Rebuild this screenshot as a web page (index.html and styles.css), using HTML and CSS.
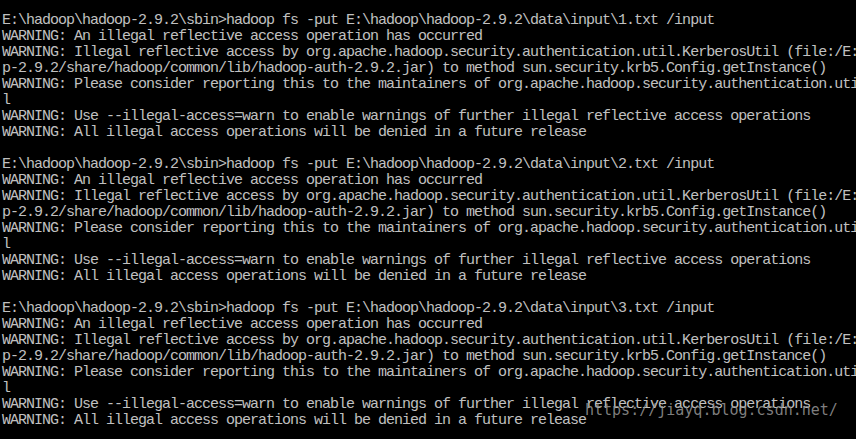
FILE: index.html
```html
<!DOCTYPE html>
<html>
<head>
<meta charset="utf-8">
<link rel="stylesheet" href="styles.css">
</head>
<body>
<div class="console">
<pre class="out">
E:\hadoop\hadoop-2.9.2\sbin>hadoop fs -put E:\hadoop\hadoop-2.9.2\data\input\1.txt /input
WARNING: An illegal reflective access operation has occurred
WARNING: Illegal reflective access by org.apache.hadoop.security.authentication.util.KerberosUtil (file:/E:/hadoop/hadoo
p-2.9.2/share/hadoop/common/lib/hadoop-auth-2.9.2.jar) to method sun.security.krb5.Config.getInstance()
WARNING: Please consider reporting this to the maintainers of org.apache.hadoop.security.authentication.util.KerberosUti
l
WARNING: Use --illegal-access=warn to enable warnings of further illegal reflective access operations
WARNING: All illegal access operations will be denied in a future release

E:\hadoop\hadoop-2.9.2\sbin>hadoop fs -put E:\hadoop\hadoop-2.9.2\data\input\2.txt /input
WARNING: An illegal reflective access operation has occurred
WARNING: Illegal reflective access by org.apache.hadoop.security.authentication.util.KerberosUtil (file:/E:/hadoop/hadoo
p-2.9.2/share/hadoop/common/lib/hadoop-auth-2.9.2.jar) to method sun.security.krb5.Config.getInstance()
WARNING: Please consider reporting this to the maintainers of org.apache.hadoop.security.authentication.util.KerberosUti
l
WARNING: Use --illegal-access=warn to enable warnings of further illegal reflective access operations
WARNING: All illegal access operations will be denied in a future release

E:\hadoop\hadoop-2.9.2\sbin>hadoop fs -put E:\hadoop\hadoop-2.9.2\data\input\3.txt /input
WARNING: An illegal reflective access operation has occurred
WARNING: Illegal reflective access by org.apache.hadoop.security.authentication.util.KerberosUtil (file:/E:/hadoop/hadoo
p-2.9.2/share/hadoop/common/lib/hadoop-auth-2.9.2.jar) to method sun.security.krb5.Config.getInstance()
WARNING: Please consider reporting this to the maintainers of org.apache.hadoop.security.authentication.util.KerberosUti
l
WARNING: Use --illegal-access=warn to enable warnings of further illegal reflective access operations
WARNING: All illegal access operations will be denied in a future release</pre>
<div class="watermark">https://jiayq.blog.csdn.net/</div>
</div>
</body>
</html>
```
FILE: styles.css
```css
html, body {
  margin: 0;
  padding: 0;
  background: #000;
}
.console {
  position: relative;
  width: 856px;
  height: 439px;
  overflow: hidden;
  background: #000;
}
.out {
  margin: 0;
  padding: 13px 0 0 2px;
  font-family: "Liberation Mono", monospace;
  font-size: 15px;
  letter-spacing: -1px;
  line-height: 16px;
  color: #c0c0c0;
  white-space: pre;
}
.watermark {
  position: absolute;
  left: 585px;
  top: 402px;
  font-family: "DejaVu Sans Mono", monospace;
  font-size: 15px;
  line-height: 16px;
  color: rgba(150, 150, 150, 0.85);
  white-space: nowrap;
}
```
